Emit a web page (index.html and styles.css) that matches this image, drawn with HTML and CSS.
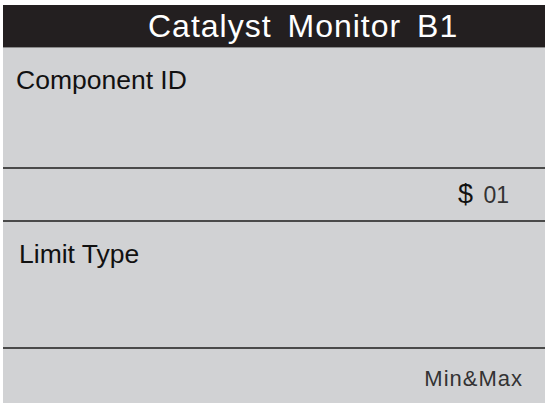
FILE: index.html
```html
<!DOCTYPE html>
<html>
<head>
    <meta charset='utf-8'>
    <title>Catalyst Monitor B1</title>
    <link rel="stylesheet" href="styles.css">
</head>
<body>
    <div class="screen">
        <div class="title">Catalyst Monitor B1</div>
        <div class="label label-first">Component ID</div>
        <div class="value value-id"><span class="sign">$</span> <span class="num">01</span></div>
        <div class="label label-second">Limit Type</div>
        <div class="value value-type">Min&amp;Max</div>
    </div>
</body>
</html>
```

FILE: styles.css
```css
html,body,div{
    padding: 0;
    margin: 0;
}
body{
    background: #fff;
    font-family: "Liberation Sans", Arial, sans-serif;
}
.screen{
    margin: 5px 0 0 3px;
    width: 542px;
    background: #d1d2d4;
}
.title{
    height: 42px;
    line-height: 42px;
    background: #231f20;
    color: #fff;
    font-size: 32px;
    letter-spacing: 1px;
    word-spacing: 6px;
    padding-left: 145px;
    border-bottom: 1px solid #8a8a8a;
}
.label{
    font-size: 26.5px;
    line-height: 30px;
    color: #111;
    border-bottom: 2px solid #4a4a4a;
    box-sizing: border-box;
}
.label-first{
    height: 121px;
    padding: 17px 0 0 13px;
}
.label-second{
    height: 127px;
    padding: 17px 0 0 16px;
}
.value{
    text-align: right;
    color: #333;
}
.value-id{
    height: 53px;
    line-height: 51px;
    font-size: 23px;
    padding-top: 1px;
    padding-right: 36px;
    box-sizing: border-box;
    border-bottom: 2px solid #4a4a4a;
}
.value-id .sign{
    font-size: 27px;
    line-height: 1;
    color: #111;
    margin-right: 4px;
}
.value-type{
    height: 54px;
    box-sizing: border-box;
    padding: 6px 22px 0 0;
    line-height: 48px;
    font-size: 22px;
    letter-spacing: 1px;
}
```
